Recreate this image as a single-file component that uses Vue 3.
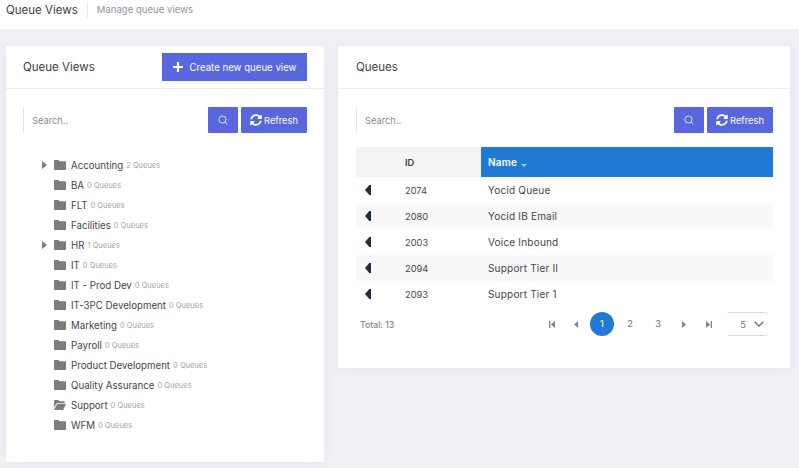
<script setup>
const folders = [
  { name: 'Accounting', count: 2, arrow: true },
  { name: 'BA', count: 0 },
  { name: 'FLT', count: 0 },
  { name: 'Facilities', count: 0 },
  { name: 'HR', count: 1, arrow: true },
  { name: 'IT', count: 0 },
  { name: 'IT - Prod Dev', count: 0 },
  { name: 'IT-3PC Development', count: 0 },
  { name: 'Marketing', count: 0 },
  { name: 'Payroll', count: 0 },
  { name: 'Product Development', count: 0 },
  { name: 'Quality Assurance', count: 0 },
  { name: 'Support', count: 0, open: true },
  { name: 'WFM', count: 0 },
];

const queues = [
  { id: 2074, name: 'Yocid Queue' },
  { id: 2080, name: 'Yocid IB Email' },
  { id: 2003, name: 'Voice Inbound' },
  { id: 2094, name: 'Support Tier II' },
  { id: 2093, name: 'Support Tier 1' },
];

const syncPath =
  'M370.7 133.3C339.5 104 298.9 88 255.8 88c-77.5.1-144.3 53.2-162.8 126.9-1.3 5.4-6.1 9.1-11.6 9.1H24.1c-7.5 0-13.2-6.8-11.8-14.2C33.9 94.9 134.8 8 256 8c66.4 0 126.8 26.1 171.3 68.7L463 41c15.1-15.1 41-4.4 41 17v134c0 13.3-10.7 24-24 24H346c-21.4 0-32.1-25.9-17-41l41.7-41.7zM32 296h134c21.4 0 32.1 25.9 17 41l-41.7 41.7c31.2 29.3 71.8 45.3 114.9 45.3 77.4-.1 144.3-53.1 162.8-126.8 1.3-5.4 6.1-9.1 11.6-9.1h57.3c7.5 0 13.2 6.8 11.8 14.2C478.1 417.1 377.2 504 256 504c-66.4 0-126.8-26.1-171.3-68.7L49 471c-15.1 15.1-41 4.4-41-17V320c0-13.3 10.7-24 24-24z';
</script>

<template>
  <div class="page">
    <header class="topbar">
      <span class="topbar-title">Queue Views</span>
      <span class="topbar-sub">Manage queue views</span>
    </header>

    <main class="content">
      <section class="card card-left">
        <div class="card-head">
          <h3>Queue Views</h3>
          <button class="btn btn-create">
            <svg width="10" height="10" viewBox="0 0 10 10"><path d="M3.9 0h2.2v3.9H10v2.2H6.1V10H3.9V6.1H0V3.900h3.900z" fill="#fff" /></svg>
            Create new queue view
          </button>
        </div>
        <div class="card-body">
          <div class="search-row">
            <input class="search" placeholder="Search.." />
            <button class="btn btn-icon">
              <svg width="10" height="10" viewBox="0 0 10 10" fill="none" stroke="#fff" stroke-width="0.8"><circle cx="4.5" cy="4.5" r="3.6" /><path d="M7 7l2.4 2.4" /></svg>
            </button>
            <button class="btn btn-refresh">
              <svg width="12" height="12" viewBox="0 0 512 512"><path fill="#fff" :d="syncPath" /></svg>
              Refresh
            </button>
          </div>

          <ul class="tree">
            <li v-for="f in folders" :key="f.name" class="tree-row">
              <span class="tree-arrow" :class="{ hidden: !f.arrow }"></span>
              <svg v-if="f.open" class="folder" width="12" height="10" viewBox="0 0 12 10"><path fill="#7d7d7d" d="M0 1.2C0 .5.5 0 1.2 0h3l1.3 1.3h4.200c.6 0 1 .4 1 1V3H3L0 7.500z" /><path fill="#7d7d7d" d="M3.400 3.800H12L9.200 10H0z" /></svg>
              <svg v-else class="folder" width="12" height="10" viewBox="0 0 12 10"><path fill="#7d7d7d" d="M0 1c0-.6.4-1 1-1h3.400l1.300 1.300H11c.6 0 1 .4 1 1V9c0 .6-.4 1-1 1H1c-.6 0-1-.4-1-1z" /></svg>
              <span class="tree-name">{{ f.name }}</span>
              <span class="tree-count">{{ f.count }} Queues</span>
            </li>
          </ul>
        </div>
      </section>

      <section class="card card-right">
        <div class="card-head">
          <h3>Queues</h3>
        </div>
        <div class="card-body">
          <div class="search-row">
            <input class="search" placeholder="Search.." />
            <button class="btn btn-icon">
              <svg width="10" height="10" viewBox="0 0 10 10" fill="none" stroke="#fff" stroke-width="0.8"><circle cx="4.5" cy="4.5" r="3.6" /><path d="M7 7l2.4 2.4" /></svg>
            </button>
            <button class="btn btn-refresh">
              <svg width="12" height="12" viewBox="0 0 512 512"><path fill="#fff" :d="syncPath" /></svg>
              Refresh
            </button>
          </div>

          <table class="grid">
            <thead>
              <tr>
                <th class="col-id">ID</th>
                <th class="col-name">Name <span class="sort"></span></th>
              </tr>
            </thead>
            <tbody>
              <tr v-for="q in queues" :key="q.id">
                <td class="col-id">
                  <svg class="row-arrow" width="6" height="10" viewBox="0 0 6 10"><path fill="#1f2c3a" d="M6 0v10H4.300L0 5l4.300-5z" /></svg>
                  {{ q.id }}
                </td>
                <td class="cell-name">{{ q.name }}</td>
              </tr>
            </tbody>
          </table>

          <div class="pager">
            <span class="total">Total: 13</span>
            <div class="pages">
              <svg class="pg-icon" width="6" height="7" viewBox="0 0 6 7"><path fill="#858585" d="M0 0h1.300v7H0zM6 0v7L1.800 3.500z" /></svg>
              <svg class="pg-icon prev" width="4" height="7" viewBox="0 0 4 7"><path fill="#858585" d="M4 0v7L0 3.500z" /></svg>
              <span class="pg-num active">1</span>
              <span class="pg-num">2</span>
              <span class="pg-num">3</span>
              <svg class="pg-icon next" width="4" height="7" viewBox="0 0 4 7"><path fill="#858585" d="M0 0v7l4-3.500z" /></svg>
              <svg class="pg-icon last" width="6" height="7" viewBox="0 0 6 7"><path fill="#858585" d="M0 0v7l4.200-3.500zM4.700 0H6v7H4.700z" /></svg>
              <div class="page-size">
                <span>5</span>
                <svg width="10" height="6" viewBox="0 0 10 6" fill="none" stroke="#6f6f6f" stroke-width="1.3"><path d="M.6.7L5 5l4.400-4.300" /></svg>
              </div>
            </div>
          </div>
        </div>
      </section>
    </main>
  </div>
</template>

<style scoped>
.page {
  width: 799px;
  height: 468px;
  overflow: hidden;
  background: #f0f1f7;
  font-family: Inter, "Open Sans", sans-serif;
  color: #44454c;
}
.topbar {
  height: 29px;
  background: #fff;
  display: flex;
  align-items: flex-start;
  padding: 3px 0 0 6px;
  box-sizing: border-box;
}
.topbar-title {
  font-size: 11.5px;
  line-height: 15px;
  color: #3f4047;
  padding-right: 9px;
  border-right: 1px solid #e7e8ee;
}
.topbar-sub {
  font-size: 9.5px;
  line-height: 14px;
  color: #8f92a5;
  padding-left: 9px;
  letter-spacing: 0.05px;
}
.content {
  display: flex;
  align-items: flex-start;
  gap: 14px;
  padding: 17px 9px 0 6px;
}
.card {
  background: #fff;
  box-shadow: 0 1px 12px rgba(69, 65, 78, 0.06);
}
.card-left {
  width: 318px;
  height: 416px;
  flex: none;
  overflow: hidden;
}
.card-right {
  width: 452px;
  height: 322px;
  flex: none;
}
.card-head {
  height: 43px;
  box-sizing: border-box;
  border-bottom: 1px solid #ebedf2;
  padding: 7px 17px 0;
  display: flex;
  justify-content: space-between;
  align-items: flex-start;
}
.card-right .card-head {
  padding-left: 18px;
}
.card-head h3 {
  margin: 0;
  font-size: 11.5px;
  line-height: 29px;
  font-weight: 400;
  color: #3f4047;
}
.card-body {
  padding: 18px 17px 0;
}
.card-right .card-body {
  padding: 18px 17px 0 18px;
}
.btn {
  border: none;
  background: #5867dd;
  color: #fff;
  font-family: inherit;
  padding: 0;
  display: flex;
  align-items: center;
  justify-content: center;
}
.btn-create {
  width: 145px;
  height: 28px;
  font-size: 9.65px;
  gap: 7px;
}
.search-row {
  display: flex;
  height: 26px;
  gap: 3px;
}
.search {
  flex: 1;
  min-width: 0;
  border: none;
  border-left: 1px solid #e4e5ea;
  padding: 0 0 0 8px;
  outline: none;
  font-family: inherit;
  font-size: 9.3px;
  color: #3f4047;
  background: #fff;
}
.search::placeholder {
  color: #8a8a8f;
}
.btn-icon {
  width: 30px;
  border-radius: 1px;
  flex: none;
}
.btn-refresh {
  width: 66px;
  flex: none;
  font-size: 9.3px;
  gap: 2px;
  border-radius: 1px;
}
.tree {
  list-style: none;
  margin: 22px 0 0;
  padding: 0;
  height: 280px;
  overflow: hidden;
}
.tree-row {
  height: 20px;
  display: flex;
  align-items: center;
  padding-left: 19px;
  white-space: nowrap;
}
.tree-arrow {
  width: 0;
  height: 0;
  border-style: solid;
  border-width: 4.5px 0 4.5px 5px;
  border-color: transparent transparent transparent #7d7d7d;
  margin-right: 7px;
}
.tree-arrow.hidden {
  visibility: hidden;
}
.folder {
  flex: none;
  margin-right: 5px;
}
.tree-name {
  font-size: 9.7px;
  color: #44454c;
  margin-right: 3px;
}
.tree-count {
  font-size: 7.5px;
  color: #a6a6a6;
}
.grid {
  width: 417px;
  margin-top: 14px;
  border-collapse: collapse;
  table-layout: fixed;
  font-size: 9.3px;
}
.grid th {
  height: 30px;
  padding: 0;
  text-align: left;
  font-weight: 600;
  color: #3f4047;
  background: #f4f4f4;
}
.grid .col-id {
  width: 125px;
  padding-left: 49px;
  box-sizing: border-box;
  position: relative;
}
.grid th.col-name {
  background: #2079d4;
  color: #fff;
  padding-left: 7px;
  font-size: 10px;
  letter-spacing: 0.2px;
}
.sort {
  display: inline-block;
  width: 0;
  height: 0;
  margin-left: 1px;
  vertical-align: -1px;
  border-style: solid;
  border-width: 3px 3px 0;
  border-color: #a9c9ec transparent transparent;
}
.grid td {
  height: 26px;
  padding: 0;
  color: #44454c;
}
.grid td.cell-name {
  padding-left: 7px;
  font-size: 10px;
  letter-spacing: 0.2px;
}
.grid tbody tr:nth-child(even) {
  background: #f8f8f8;
}
.row-arrow {
  position: absolute;
  left: 9px;
  top: 8px;
}
.pager {
  display: flex;
  align-items: center;
  justify-content: space-between;
  margin-top: 5px;
  height: 24px;
  padding: 0 5px 0 4px;
}
.total {
  font-size: 8.8px;
  color: #6f7285;
  padding-top: 1px;
}
.pages {
  display: flex;
  align-items: center;
  font-size: 9.3px;
  color: #757575;
}
.pg-icon {
  flex: none;
}
.prev {
  margin-left: 19px;
  margin-right: 10px;
}
.next {
  margin-left: 10px;
}
.last {
  margin-left: 20px;
  margin-right: 15px;
}
.pg-num {
  width: 28px;
  text-align: center;
  line-height: 24px;
}
.pg-num.active {
  width: 24px;
  height: 24px;
  margin: 0 2px;
  border-radius: 50%;
  background: #2079d4;
  color: #fff;
}
.page-size {
  width: 41px;
  height: 24px;
  box-sizing: border-box;
  border-top: 1px solid #d9d9d9;
  border-bottom: 1px solid #d9d9d9;
  border-radius: 3px;
  display: flex;
  align-items: center;
  justify-content: flex-end;
  gap: 8px;
  padding-right: 4px;
}
</style>
